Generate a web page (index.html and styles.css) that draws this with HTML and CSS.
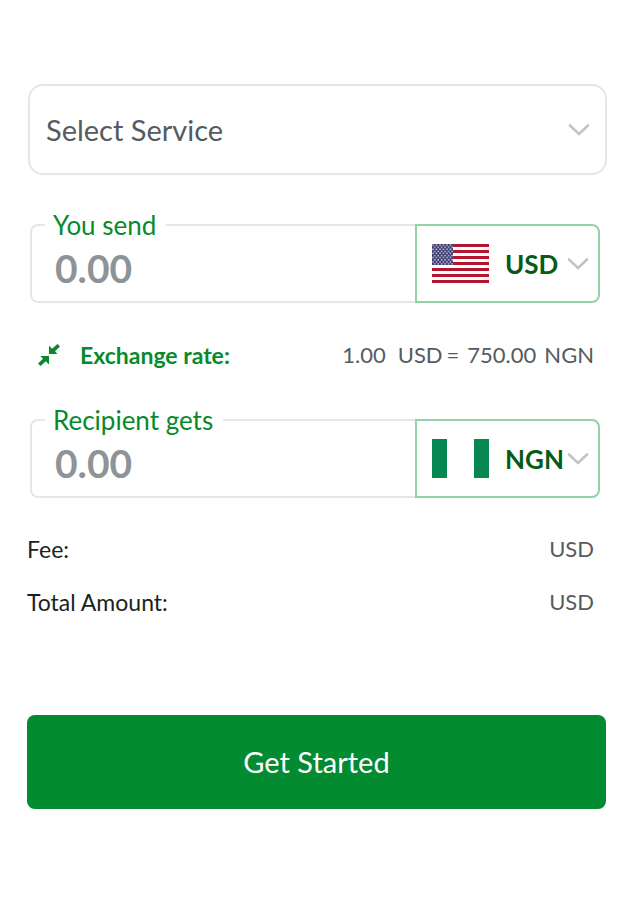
FILE: index.html
```html
<!DOCTYPE html>
<html lang="en">
<head>
<meta charset="utf-8">
<meta name="viewport" content="width=device-width, initial-scale=1">
<title>Send money</title>
<link rel="stylesheet" href="styles.css">
</head>
<body>
<svg class="defs" aria-hidden="true">
  <symbol id="chevron" viewBox="0 0 22 14">
    <path d="M2 2.500l9 8.500 9-8.500" fill="none" stroke="currentColor" stroke-width="2.600" stroke-linecap="round"/>
  </symbol>
</svg>
<form class="transfer">
  <div class="service">
    <select class="service-select" aria-label="Service">
      <option>Select Service</option>
    </select>
    <svg class="chevron"><use href="#chevron"/></svg>
  </div>

  <div class="amount">
    <fieldset class="amount-field">
      <legend><label for="send">You send</label></legend>
      <input id="send" type="text" inputmode="decimal" placeholder="0.00">
    </fieldset>
    <div class="currency">
      <svg class="flag" viewBox="0 0 57 39" preserveAspectRatio="none" aria-hidden="true">
        <defs>
          <pattern id="stars" width="3.500" height="4.200" patternUnits="userSpaceOnUse">
            <circle cx="1" cy="1.100" r="0.800" fill="#d5d5e6"/>
            <circle cx="2.700" cy="3.200" r="0.800" fill="#d5d5e6"/>
          </pattern>
        </defs>
        <path fill="#fff" d="M0 0h57v39H0z"/>
        <path stroke="#b5142f" stroke-width="3" d="M0 1.500h57M0 7.500h57M0 13.500h57M0 19.500h57M0 25.500h57M0 31.500h57M0 37.500h57"/>
        <path fill="#3c3b6e" d="M0 0h21v21H0z"/>
        <path fill="url(#stars)" d="M0 0h21v21H0z"/>
      </svg>
      <select class="currency-select" aria-label="Send currency">
        <option>USD</option>
      </select>
      <svg class="chevron"><use href="#chevron"/></svg>
    </div>
  </div>

  <div class="rate">
    <svg class="rate-icon" viewBox="0 0 22 22" aria-hidden="true">
      <path fill="currentColor" d="M19.500 0l2.500 2.500-5 4.800 2.500 2.700h-8.500V1.500l3 3.200zM2.500 22L0 19.500l5-4.800-2.700-2.700H11v8.500l-3.200-3.200z"/>
    </svg>
    <span class="rate-label">Exchange rate:</span>
    <span class="rate-value"><span class="rate-unit">1.00</span><span class="rate-base">USD<span>=</span></span><span>750.00</span><span>NGN</span></span>
  </div>

  <div class="amount">
    <fieldset class="amount-field">
      <legend><label for="receive">Recipient gets</label></legend>
      <input id="receive" type="text" inputmode="decimal" placeholder="0.00">
    </fieldset>
    <div class="currency">
      <svg class="flag" viewBox="0 0 57 39" preserveAspectRatio="none" aria-hidden="true">
        <path fill="#fff" d="M0 0h57v39H0z"/>
        <path fill="#068650" d="M0 0h15v39H0zM42 0h15v39H42z"/>
      </svg>
      <select class="currency-select" aria-label="Recipient currency">
        <option>NGN</option>
      </select>
      <svg class="chevron"><use href="#chevron"/></svg>
    </div>
  </div>

  <dl class="summary">
    <div class="summary-row"><dt>Fee:</dt><dd>USD</dd></div>
    <div class="summary-row"><dt>Total Amount:</dt><dd>USD</dd></div>
  </dl>

  <button class="submit" type="button">Get Started</button>
</form>
</body>
</html>
```
FILE: styles.css
```css
* {
  box-sizing: border-box;
}

body {
  margin: 0;
  background: #fff;
  color: #1c1f21;
  font-family: Lato, "Liberation Sans", sans-serif;
  font-size: 23px;
  line-height: 30px;
}

.defs {
  position: absolute;
  width: 0;
  height: 0;
}

.transfer {
  display: flex;
  flex-direction: column;
  padding: 84px 22px 40px 27px;
}

select,
input,
button {
  font: inherit;
  color: inherit;
}

select {
  appearance: none;
  width: 100%;
  height: 100%;
  border: 0;
  background: transparent;
}

.service,
.currency {
  position: relative;
}

.service {
  height: 91px;
  margin-left: 1px;
  border: 2px solid #e5e7e7;
  border-radius: 15px;
  color: #555b5f;
  font-size: 29px;
}

.service-select {
  padding: 0 48px 0 16px;
}

.chevron {
  position: absolute;
  top: calc(50% - 7px);
  right: 15px;
  width: 22px;
  height: 14px;
  color: #c0c5c9;
  pointer-events: none;
}

.amount {
  display: flex;
  align-items: flex-end;
  margin: 35px 7px 0 3px;
}

.amount-field {
  flex: 1;
  min-width: 0;
  height: 93px;
  margin: 0;
  padding: 0 0 0 13px;
  border: 2px solid #e5e7e7;
  border-right: 0;
  border-radius: 8px 0 0 8px;
}

.amount-field legend {
  padding: 0 10px 0 8px;
  color: #078a2c;
  font-size: 26px;
}

.amount-field input {
  display: block;
  width: 100%;
  height: 56px;
  padding: 0 10px;
  border: 0;
  background: transparent;
  color: #1c1f21;
  font-size: 39px;
  font-weight: 700;
}

.amount-field input::placeholder {
  color: #8d9396;
  opacity: 1;
}

.currency {
  width: 185px;
  height: 79px;
  border: 2px solid #92d2a5;
  border-radius: 0 8px 8px 0;
}

.currency-select {
  padding: 0 0 0 88px;
  color: #045c16;
  font-size: 26px;
  font-weight: 700;
}

.flag {
  position: absolute;
  top: 18px;
  left: 15px;
  width: 57px;
  height: 39px;
  pointer-events: none;
}

.currency .chevron {
  right: 9px;
}

.rate {
  display: flex;
  align-items: center;
  margin: 37px 13px 0 11px;
}

.rate-icon {
  width: 22px;
  height: 22px;
  margin-right: 20px;
  color: #078a2c;
}

.rate-label {
  color: #078a2c;
  font-weight: 700;
}

.rate-value {
  display: flex;
  gap: 8px;
  margin-left: auto;
  color: #555b5f;
  font-size: 22px;
}

.rate-unit {
  margin-right: 4px;
}

.rate-base {
  display: flex;
  gap: 4px;
}

.summary {
  display: grid;
  gap: 23px;
  margin: 36px 13px 0 0;
}

.summary-row {
  display: flex;
  justify-content: space-between;
}

.summary-row dd {
  margin: 0;
  color: #555b5f;
  font-size: 22px;
}

.submit {
  height: 94px;
  margin: 98px 1px 0 0;
  border: 0;
  border-radius: 8px;
  background: #028b31;
  color: #fff;
  font-size: 29px;
}
```
